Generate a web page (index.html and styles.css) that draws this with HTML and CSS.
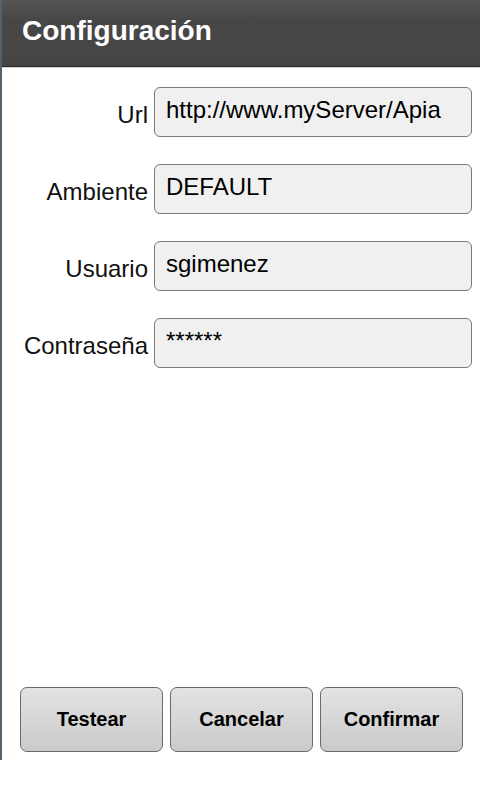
FILE: index.html
```html
<!DOCTYPE html>
<html>
<head>
<meta charset="utf-8">
<link rel="stylesheet" href="styles.css">
</head>
<body>
<div class="app">
  <div class="header"><span class="title">Configuración</span></div>
  <div class="form">
    <div class="row"><label class="label">Url</label><div class="field">http://www.myServer/Apia</div></div>
    <div class="row"><label class="label">Ambiente</label><div class="field">DEFAULT</div></div>
    <div class="row"><label class="label">Usuario</label><div class="field">sgimenez</div></div>
    <div class="row"><label class="label">Contraseña</label><div class="field">******</div></div>
  </div>
  <div class="buttons">
    <button class="btn">Testear</button>
    <button class="btn">Cancelar</button>
    <button class="btn">Confirmar</button>
  </div>
</div>
</body>
</html>
```
FILE: styles.css
```css
html, body {
  margin: 0;
  padding: 0;
  background: #ffffff;
}
body {
  width: 480px;
  height: 800px;
  font-family: "Liberation Sans", Arial, sans-serif;
}
.app {
  box-sizing: border-box;
  height: 760px;
  border-left: 2px solid #56616e;
  display: flex;
  flex-direction: column;
}
.header {
  height: 66px;
  background: linear-gradient(#555555, #474747 30%, #454545);
  border-bottom: 1px solid #262626;
  box-shadow: 0 1px 0 #d8d8d8;
  display: flex;
  align-items: center;
  padding-left: 20px;
  flex-shrink: 0;
}
.title {
  color: #ffffff;
  font-weight: bold;
  font-size: 28px;
  margin-top: -4px;
}
.form {
  padding-top: 20px;
  display: flex;
  flex-direction: column;
  gap: 27px;
}
.row {
  display: flex;
  align-items: center;
  gap: 6px;
}
.label {
  width: 146px;
  text-align: right;
  font-size: 24px;
  color: #111111;
  padding-top: 6px;
}
.field {
  box-sizing: border-box;
  width: 318px;
  height: 50px;
  background: #f0f0f0;
  border: 1.5px solid #7a7a7a;
  border-radius: 6px;
  font-size: 24px;
  color: #000000;
  padding: 8px 0 0 11px;
  white-space: nowrap;
  overflow: hidden;
}
.buttons {
  margin-top: auto;
  display: flex;
  gap: 7px;
  padding: 0 0 8px 18px;
}
.btn {
  width: 143px;
  height: 65px;
  background: linear-gradient(#e3e3e3, #cacaca);
  border: 1.5px solid #6a6a6a;
  border-radius: 7px;
  font-family: "Liberation Sans", Arial, sans-serif;
  font-weight: bold;
  font-size: 20px;
  color: #000000;
  padding: 0 0 0 0;
}
```
